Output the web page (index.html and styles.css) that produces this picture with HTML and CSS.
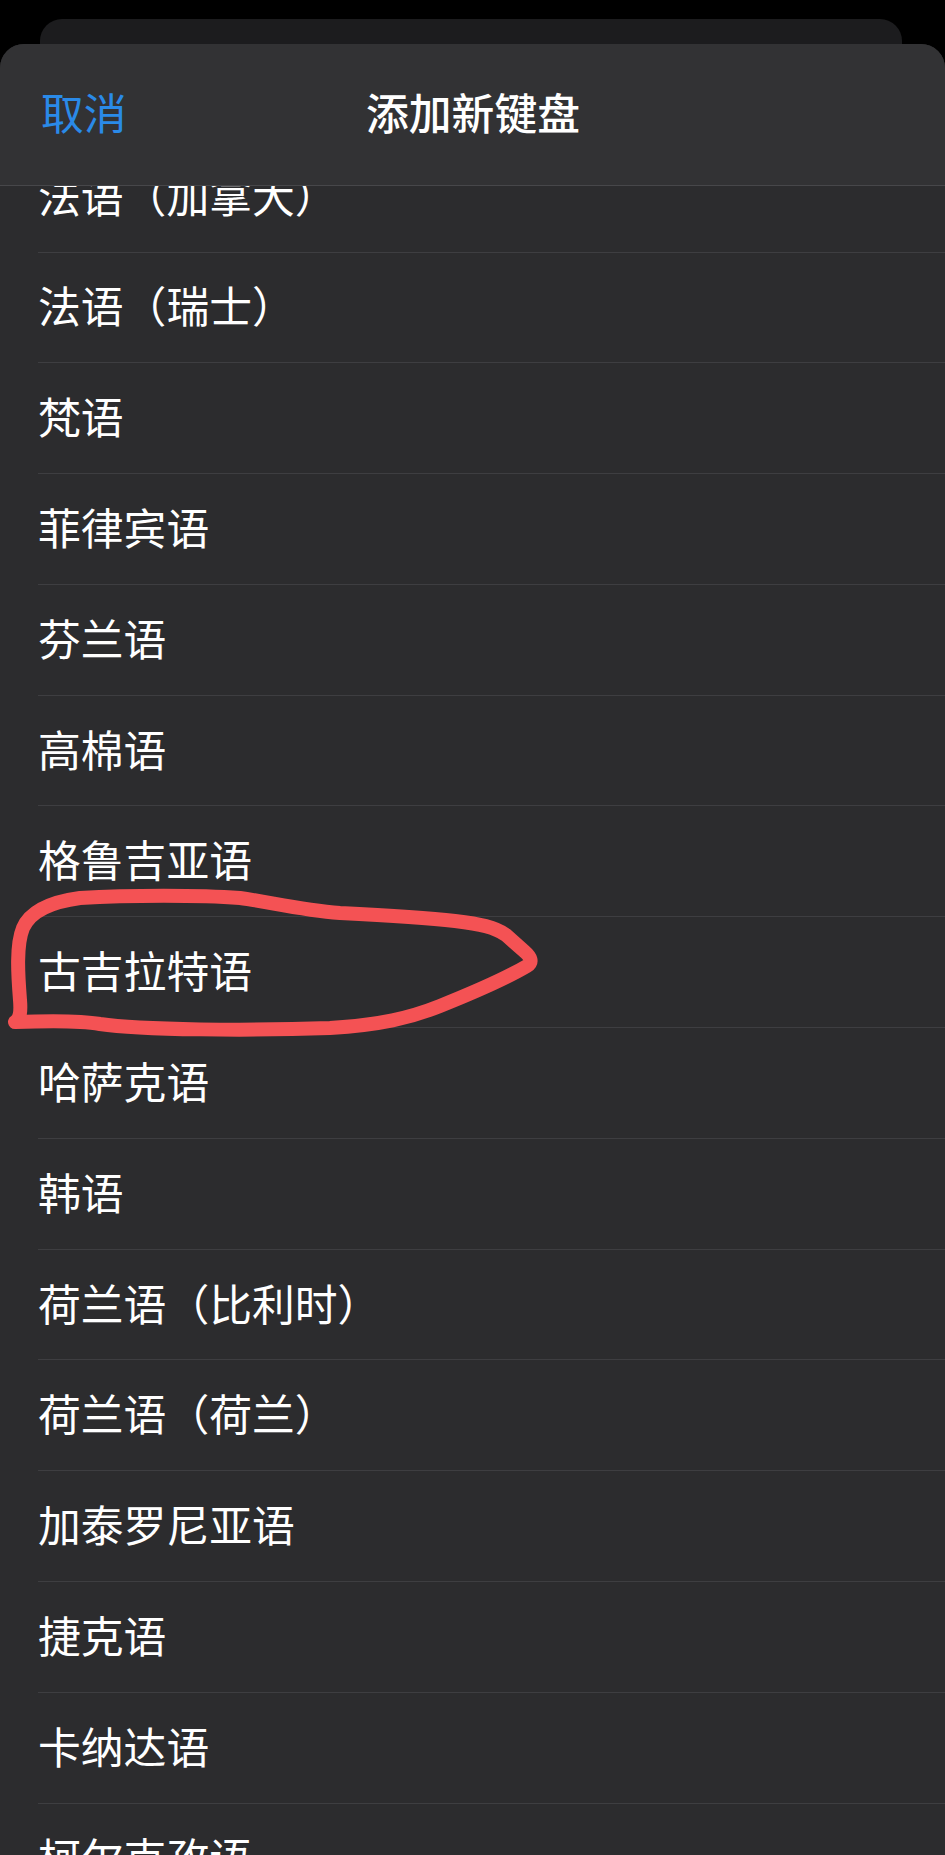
FILE: index.html
```html
<!DOCTYPE html>
<html lang="zh-CN">
<head>
    <meta charset="UTF-8">
    <meta name="viewport" content="width=device-width, initial-scale=1.0">
    <title>添加新键盘</title>
    <link rel="stylesheet" href="styles.css">
</head>
<body>
    <div class="screen">
        <div class="back-card"></div>
        <div class="sheet">
            <div class="sheet-header">
                <span class="cancel">取消</span>
                <span class="title">添加新键盘</span>
                <span></span>
            </div>
            <div class="list">
                <ul class="rows">
                    <li class="row"><span class="row-label">法语（加拿大）</span></li>
                    <li class="row"><span class="row-label">法语（瑞士）</span></li>
                    <li class="row"><span class="row-label">梵语</span></li>
                    <li class="row"><span class="row-label">菲律宾语</span></li>
                    <li class="row"><span class="row-label">芬兰语</span></li>
                    <li class="row"><span class="row-label">高棉语</span></li>
                    <li class="row"><span class="row-label">格鲁吉亚语</span></li>
                    <li class="row"><span class="row-label">古吉拉特语</span></li>
                    <li class="row"><span class="row-label">哈萨克语</span></li>
                    <li class="row"><span class="row-label">韩语</span></li>
                    <li class="row"><span class="row-label">荷兰语（比利时）</span></li>
                    <li class="row"><span class="row-label">荷兰语（荷兰）</span></li>
                    <li class="row"><span class="row-label">加泰罗尼亚语</span></li>
                    <li class="row"><span class="row-label">捷克语</span></li>
                    <li class="row"><span class="row-label">卡纳达语</span></li>
                    <li class="row"><span class="row-label">柯尔克孜语</span></li>
                </ul>
            </div>
        </div>

        <!-- hand-drawn mark around 古吉拉特语 -->
        <svg class="scribble" viewBox="0 0 945 1855" width="945" height="1855">
            <path d="M15,1022 C40,1021 78,1020 100,1024 C140,1030 250,1031 330,1028
                     C380,1025 410,1018 440,1006 C480,990 510,976 527,966
                     C533,962 531,957 524,951 L506,935 C495,927 480,924 455,921
                     C420,917 380,915 340,913 C300,910 270,902 240,898
                     C200,895 130,895 80,898 C50,902 30,912 23,928
                     C16,945 18,975 20,1000 C21,1012 20,1019 15,1022"
                  fill="none" stroke="#f45254" stroke-width="14"
                  stroke-linecap="round" stroke-linejoin="round"/>
        </svg>
    </div>
</body>
</html>
```

FILE: styles.css
```css
* {
    box-sizing: border-box;
}
body {
    margin: 0;
    background-color: #000;
    font-family: "Noto Sans CJK SC", "Noto Sans", sans-serif;
    color: #fff;
}
.screen {
    position: relative;
    width: 945px;
    height: 1855px;
    overflow: hidden;
    padding-top: 19px;
    display: flex;
    flex-direction: column;
}
.back-card {
    height: 25px;
    margin: 0 43px 0 40px;
    background-color: #1c1c1e;
    border-radius: 22px 22px 0 0;
}
.sheet {
    flex: 1;
    display: flex;
    flex-direction: column;
    background-color: #2c2c2e;
    border-radius: 24px 24px 0 0;
    overflow: hidden;
}
.sheet-header {
    height: 142px;
    flex-shrink: 0;
    display: grid;
    grid-template-columns: 1fr auto 1fr;
    align-items: center;
    padding: 0 40px 7px 41px;
    background-color: #323234;
    border-bottom: 1px solid #47474a;
    font-size: 42.8px;
}
.cancel {
    color: #2a8ae8;
}
.title {
    font-weight: 500;
}
.list {
    flex: 1;
    overflow: hidden;
}
.rows {
    list-style: none;
    margin: -44.3px 0 0;
    padding: 0;
}
.row {
    padding-left: 38px;
}
.row-label {
    display: flex;
    align-items: center;
    height: 110.8px;
    border-bottom: 1px solid #3e3e41;
    font-size: 42.8px;
    padding-bottom: 6px;
}
.scribble {
    position: absolute;
    top: 0;
    left: 0;
    pointer-events: none;
}
```
